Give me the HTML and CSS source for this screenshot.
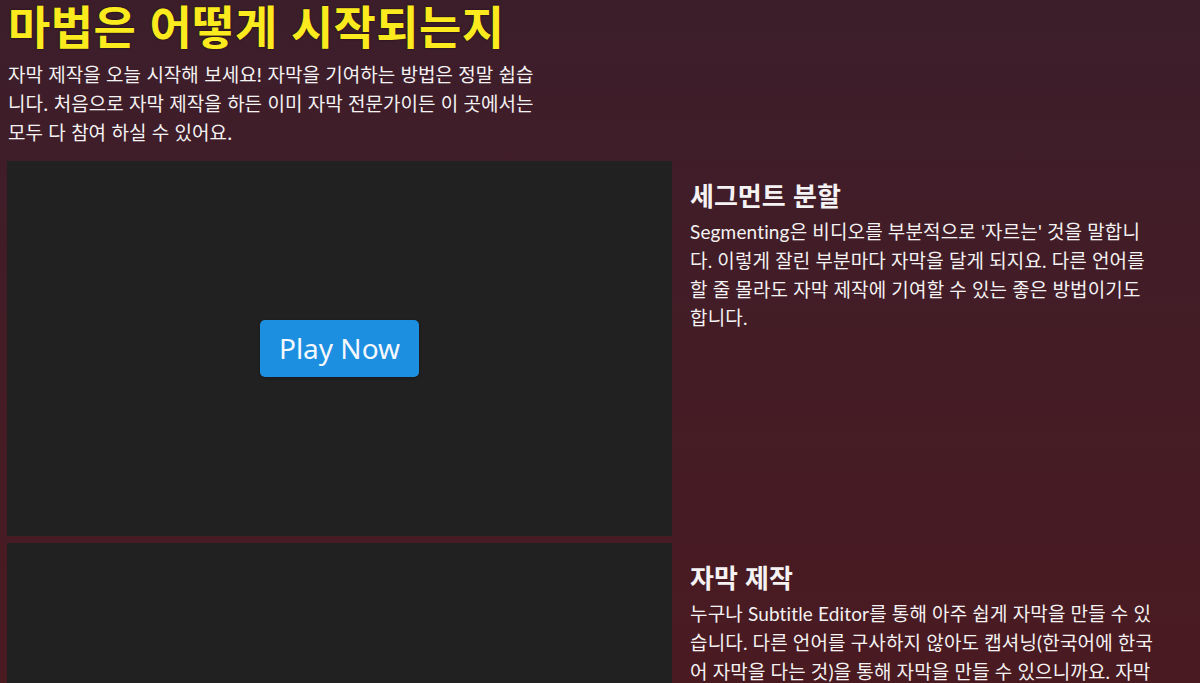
FILE: index.html
```html
<!DOCTYPE html>
<html lang="ko">
  <head>
    <meta charset="UTF-8" />
    <meta name="viewport" content="width=device-width, initial-scale=1.0" />
    <title>마법은 어떻게 시작되는지</title>
    <link rel="stylesheet" href="styles.css">
  </head>
  <body>
    <div class="page">
      <header class="intro">
        <h1>마법은 어떻게 시작되는지</h1>
        <p>
          자막 제작을 오늘 시작해 보세요! 자막을 기여하는 방법은 정말 쉽습니다. 처음으로 자막 제작을 하든 이미 자막 전문가이든 이 곳에서는 모두 다 참여 하실 수 있어요.
        </p>
      </header>

      <div class="steps">
        <div class="step">
          <div class="video">
            <button class="play-button">Play Now</button>
          </div>
          <div class="step-text">
            <h2>세그먼트 분할</h2>
            <p>
              Segmenting은 비디오를 부분적으로 '자르는' 것을 말합니다. 이렇게 잘린 부분마다 자막을 달게 되지요. 다른 언어를 할 줄 몰라도 자막 제작에 기여할 수 있는 좋은 방법이기도 합니다.
            </p>
          </div>
        </div>

        <div class="step">
          <div class="video"></div>
          <div class="step-text">
            <h2>자막 제작</h2>
            <p>
              누구나 Subtitle Editor를 통해 아주 쉽게 자막을 만들 수 있습니다. 다른 언어를 구사하지 않아도 캡셔닝(한국어에 한국어 자막을 다는 것)을 통해 자막을 만들 수 있으니까요. 자막 제작은 비디오를 더 많은 사람들이 즐길 수 있도록 도와줍니다.
            </p>
          </div>
        </div>
      </div>
    </div>
  </body>
</html>
```

FILE: styles.css
```css
html,
body {
  height: 100%;
}

body {
  font-family: Lato, "Noto Sans CJK KR", sans-serif;
  margin: 0;
  padding: 0;
  background: linear-gradient(180deg, #3c1e2b 0%, #451c25 60%, #4a1a21 100%);
  color: #f4f2f2;
  overflow: hidden;
}

.page {
  padding: 0 42px 0 7px;
}

.intro h1 {
  font-family: "Noto Sans CJK KR", sans-serif;
  font-size: 46px;
  line-height: 50px;
  font-weight: 700;
  letter-spacing: 0.4px;
  color: #fbeb1e;
  text-shadow: 0 0 2px rgba(0, 0, 0, 0.7);
  margin: -1px 0 0 1px;
}

.intro p {
  font-family: Inter, "Noto Sans CJK KR", sans-serif;
  font-size: 19px;
  line-height: 28.8px;
  max-width: 542px;
  margin: 13px 0 13px 1px;
}

.steps {
  display: flex;
  flex-direction: column;
  gap: 7px;
}

.step {
  display: grid;
  grid-template-columns: 665px 1fr;
  column-gap: 18px;
}

.video {
  height: 375px;
  background: #212121;
  display: flex;
  align-items: center;
  justify-content: center;
}

.play-button {
  font-family: "Noto Sans", "Open Sans", sans-serif;
  font-size: 28px;
  line-height: 31px;
  padding: 13px 19px;
  background: #1c8fe0;
  color: #f5f8fc;
  border: none;
  border-radius: 5px;
  cursor: pointer;
  box-shadow: 0 1px 3px rgba(0, 0, 0, 0.3);
}

.step-text {
  padding-top: 19px;
}

.step-text h2 {
  font-family: "Noto Sans CJK KR", sans-serif;
  font-size: 26px;
  line-height: 29px;
  font-weight: 700;
  margin: 0 0 9px;
}

.step-text p {
  font-size: 19px;
  line-height: 28.6px;
  letter-spacing: 0.15px;
  margin: 0;
}
```
